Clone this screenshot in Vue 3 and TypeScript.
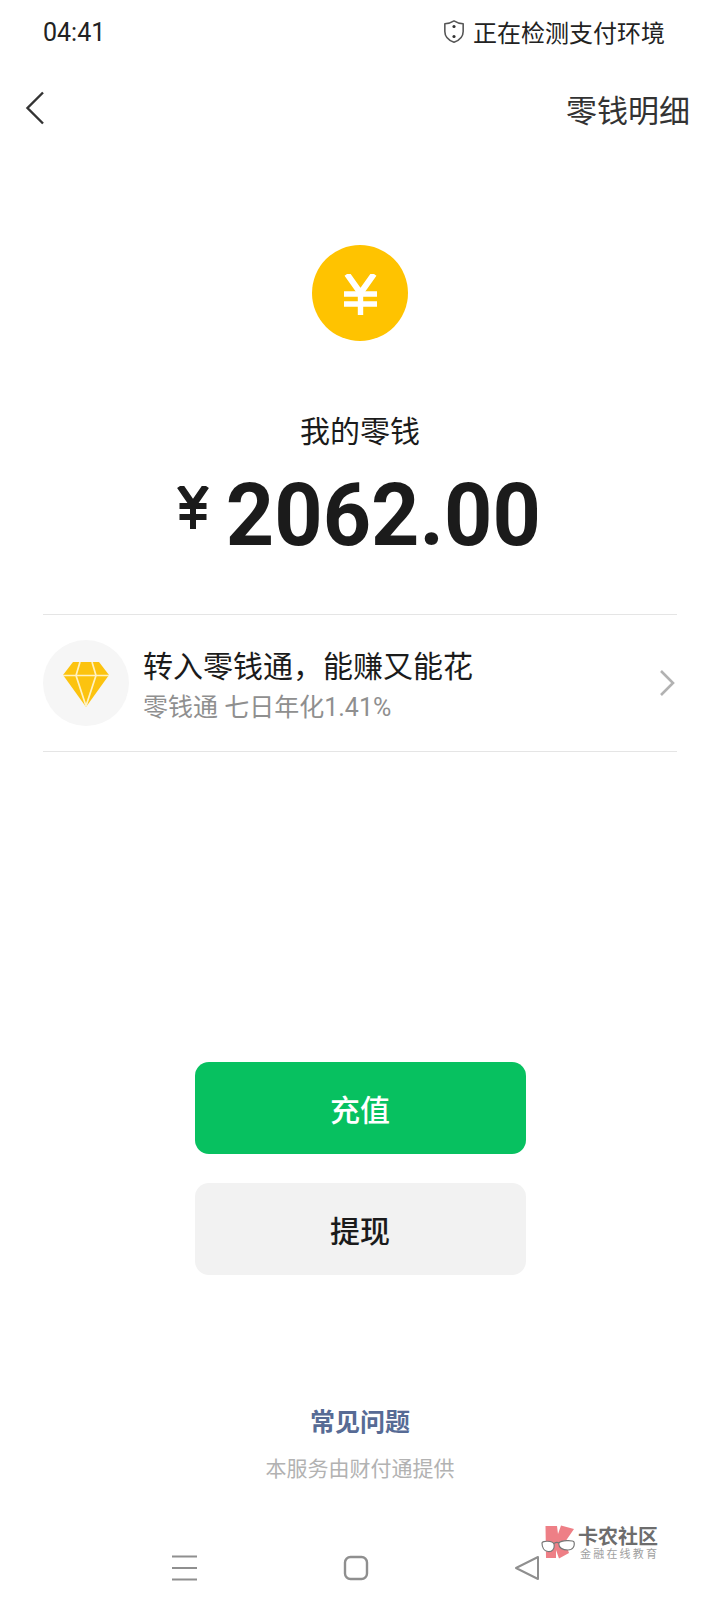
<script setup lang="ts">
const navIcons = ['menu', 'home', 'back']
</script>

<template>
  <div class="page">
    <div class="status">
      <span class="status__time">04:41</span>
      <span class="status__right">
        <svg class="status__shield" viewBox="0 0 24 26" fill="none">
          <path d="M12 1.5 C15 3.5 18 4.5 22 4.5 V13 C22 19 17.5 22.8 12 24.8 C6.5 22.8 2 19 2 13 V4.5 C6 4.5 9 3.5 12 1.5 Z" stroke="#555" stroke-width="1.7" stroke-linejoin="round" />
          <circle cx="12" cy="7.5" r="1.7" fill="#333" />
          <circle cx="12" cy="18.5" r="1.7" fill="#333" />
        </svg>
        正在检测支付环境
      </span>
    </div>

    <div class="topbar">
      <svg class="topbar__back" viewBox="0 0 20 34" fill="none">
        <path d="M18 1.5 L2.5 17 L18 32.5" stroke="#333" stroke-width="2.4" />
      </svg>
      <span class="topbar__link">零钱明细</span>
    </div>

    <div class="coin">
      <svg viewBox="0 0 33 41" class="coin__glyph" fill="none">
        <path d="M3 0 L16.5 19 L30 0" stroke="#fff" stroke-width="6" />
        <path d="M16.5 17 V41 M0 20 H33 M0 30 H33" stroke="#fff" stroke-width="5.4" />
      </svg>
    </div>

    <div class="label">我的零钱</div>
    <div class="amount">
      <svg viewBox="0 0 32 43" class="amount__yen" fill="none">
        <path d="M3 0 L16 19 L29 0" stroke="#1b1b1b" stroke-width="7" />
        <path d="M16 17 V43 M2.5 20 H29.5 M2.5 31 H29.5" stroke="#1b1b1b" stroke-width="6" />
      </svg>
      <span class="amount__num">2062.00</span>
    </div>

    <div class="promo">
      <div class="promo__icon">
        <svg viewBox="0 0 46 45" class="promo__gem">
          <path d="M10 0 H36 L46 13 L23 45 L0 13 Z" fill="#fcc30f" />
          <path d="M0 13.5 H46 M17 0 L13 13.5 L23 44 L33 13.5 L29 0" stroke="#fff2c2" stroke-width="1.7" fill="none" />
        </svg>
      </div>
      <div class="promo__text">
        <div class="promo__title">转入零钱通，能赚又能花</div>
        <div class="promo__sub">零钱通 七日年化1.41%</div>
      </div>
      <svg class="promo__arrow" viewBox="0 0 16 28" fill="none">
        <path d="M2 2 L14 14 L2 26" stroke="#b2b2b2" stroke-width="2.6" />
      </svg>
    </div>

    <div class="actions">
      <button class="btn btn--primary">充值</button>
      <button class="btn btn--plain">提现</button>
    </div>

    <div class="footer">
      <div class="footer__faq">常见问题</div>
      <div class="footer__note">本服务由财付通提供</div>
    </div>

    <div class="nav">
      <svg v-for="n in navIcons" :key="n" class="nav__icon" viewBox="0 0 26 26" fill="none">
        <path v-if="n === 'menu'" d="M0 1.5 H25 M0 13 H25 M0 24.5 H25" stroke="#8f8f8f" stroke-width="2" />
        <rect v-else-if="n === 'home'" x="2" y="2" width="22" height="22" rx="5.5" stroke="#8f8f8f" stroke-width="2.4" />
        <path v-else d="M24 2 V24 L2 13 Z" stroke="#8f8f8f" stroke-width="2" stroke-linejoin="round" />
      </svg>
    </div>

    <!-- watermark sits over the nav bar -->
    <div class="mark">
      <svg class="mark__logo" viewBox="0 0 34 34">
        <path d="M4.5 1 H16 L17 9 L20 0.5 L33 4 L24 17 L28 28 L18 33.5 L15 25 V33 H5 Z" fill="#ee7f86" />
        <path d="M1 18 C1 15.5 12 15.5 13 19 C14 24 11 27 7 26.5 C3 26 1 22 1 18 Z M18 18 C20 15 32 15 33 17 C34 21 32 25 27 25 C22 25 17 23 18 18 Z" fill="#fff" stroke="#777" stroke-width="1.2" />
        <path d="M13 18.5 C15 17 16.5 17 18 18" fill="none" stroke="#777" stroke-width="1.2" />
      </svg>
      <div class="mark__text">
        <div class="mark__name">卡农社区</div>
        <div class="mark__slogan">金融在线教育</div>
      </div>
    </div>
  </div>
</template>

<style scoped>
.page {
  position: relative;
  width: 720px;
  height: 1612px;
  background: #fff;
  overflow: hidden;
  display: flex;
  flex-direction: column;
  font-family: "Roboto", "Noto Sans CJK SC", sans-serif;
  color: #1b1b1b;
}

.status {
  display: flex;
  justify-content: space-between;
  align-items: center;
  height: 64px;
  padding: 0 55px 0 43px;
  font-size: 24px;
  color: #222;
}
.status__time { font-size: 25px; }
.status__right { display: flex; align-items: center; gap: 8px; margin-top: -1px; }
.status__shield { width: 22px; height: 25px; }

.topbar {
  display: flex;
  justify-content: space-between;
  align-items: center;
  height: 88px;
  padding: 0 30px 0 25px;
}
.topbar__back { width: 20px; height: 34px; }
.topbar__link { font-size: 31px; color: #333; }

.coin {
  width: 96px;
  height: 96px;
  margin: 93px auto 0;
  border-radius: 50%;
  background: #ffc300;
  display: flex;
  align-items: center;
  justify-content: center;
}
.coin__glyph { width: 33px; height: 41px; margin-top: 2px; }

.label {
  margin-top: 70px;
  text-align: center;
  font-size: 30px;
  line-height: 42px;
}

.amount {
  display: flex;
  justify-content: center;
  align-items: center;
  gap: 12px;
  height: 90px;
  margin-top: 17px;
  margin-left: 2px;
}
.amount__yen { width: 32px; height: 43px; margin-bottom: 16px; }
.amount__num {
  font-size: 87px;
  font-weight: 700;
  line-height: 90px;
  transform: scaleX(0.97);
}

.promo {
  display: flex;
  align-items: center;
  height: 136px;
  margin: 54px 43px 0;
  border-top: 1px solid #e5e5e5;
  border-bottom: 1px solid #e5e5e5;
}
.promo__icon {
  width: 86px;
  height: 86px;
  border-radius: 50%;
  background: #f6f6f6;
  display: flex;
  align-items: center;
  justify-content: center;
  flex-shrink: 0;
}
.promo__gem { width: 46px; height: 45px; margin-top: 2px; }
.promo__text { flex: 1; margin-left: 14px; padding-top: 6px; }
.promo__title { font-size: 30px; line-height: 40px; color: #1b1b1b; }
.promo__sub { font-size: 25px; line-height: 34px; color: #8f8f8f; margin-top: 4px; }
.promo__arrow { width: 16px; height: 28px; margin-right: 2px; }

.actions {
  display: flex;
  flex-direction: column;
  align-items: center;
  gap: 29px;
  margin-top: 310px;
}
.btn {
  width: 331px;
  height: 92px;
  border: none;
  border-radius: 14px;
  font-family: inherit;
  font-size: 30px;
  font-weight: 500;
}
.btn--primary { background: #07c160; color: #fff; }
.btn--plain { background: #f2f2f2; color: #1b1b1b; }

.footer { margin-top: 131px; text-align: center; }
.footer__faq { font-size: 25px; font-weight: 700; line-height: 34px; color: #576b95; }
.footer__note { font-size: 21px; line-height: 30px; color: #b2b2b2; margin-top: 14px; }

.nav {
  display: flex;
  justify-content: space-between;
  margin: 71px 180px 0 172px;
}
.nav__icon { width: 26px; height: 26px; }

.mark {
  position: absolute;
  left: 541px;
  top: 1525px;
  display: flex;
  align-items: flex-start;
  gap: 3px;
}
.mark__logo { width: 34px; height: 34px; }
.mark__name { font-size: 20px; font-weight: 700; line-height: 20px; color: #6d6d6d; margin-top: 2px; }
.mark__slogan { font-size: 11px; line-height: 13px; letter-spacing: 2.2px; color: #a0a0a0; margin: 1px 0 0 2px; white-space: nowrap; }
</style>
